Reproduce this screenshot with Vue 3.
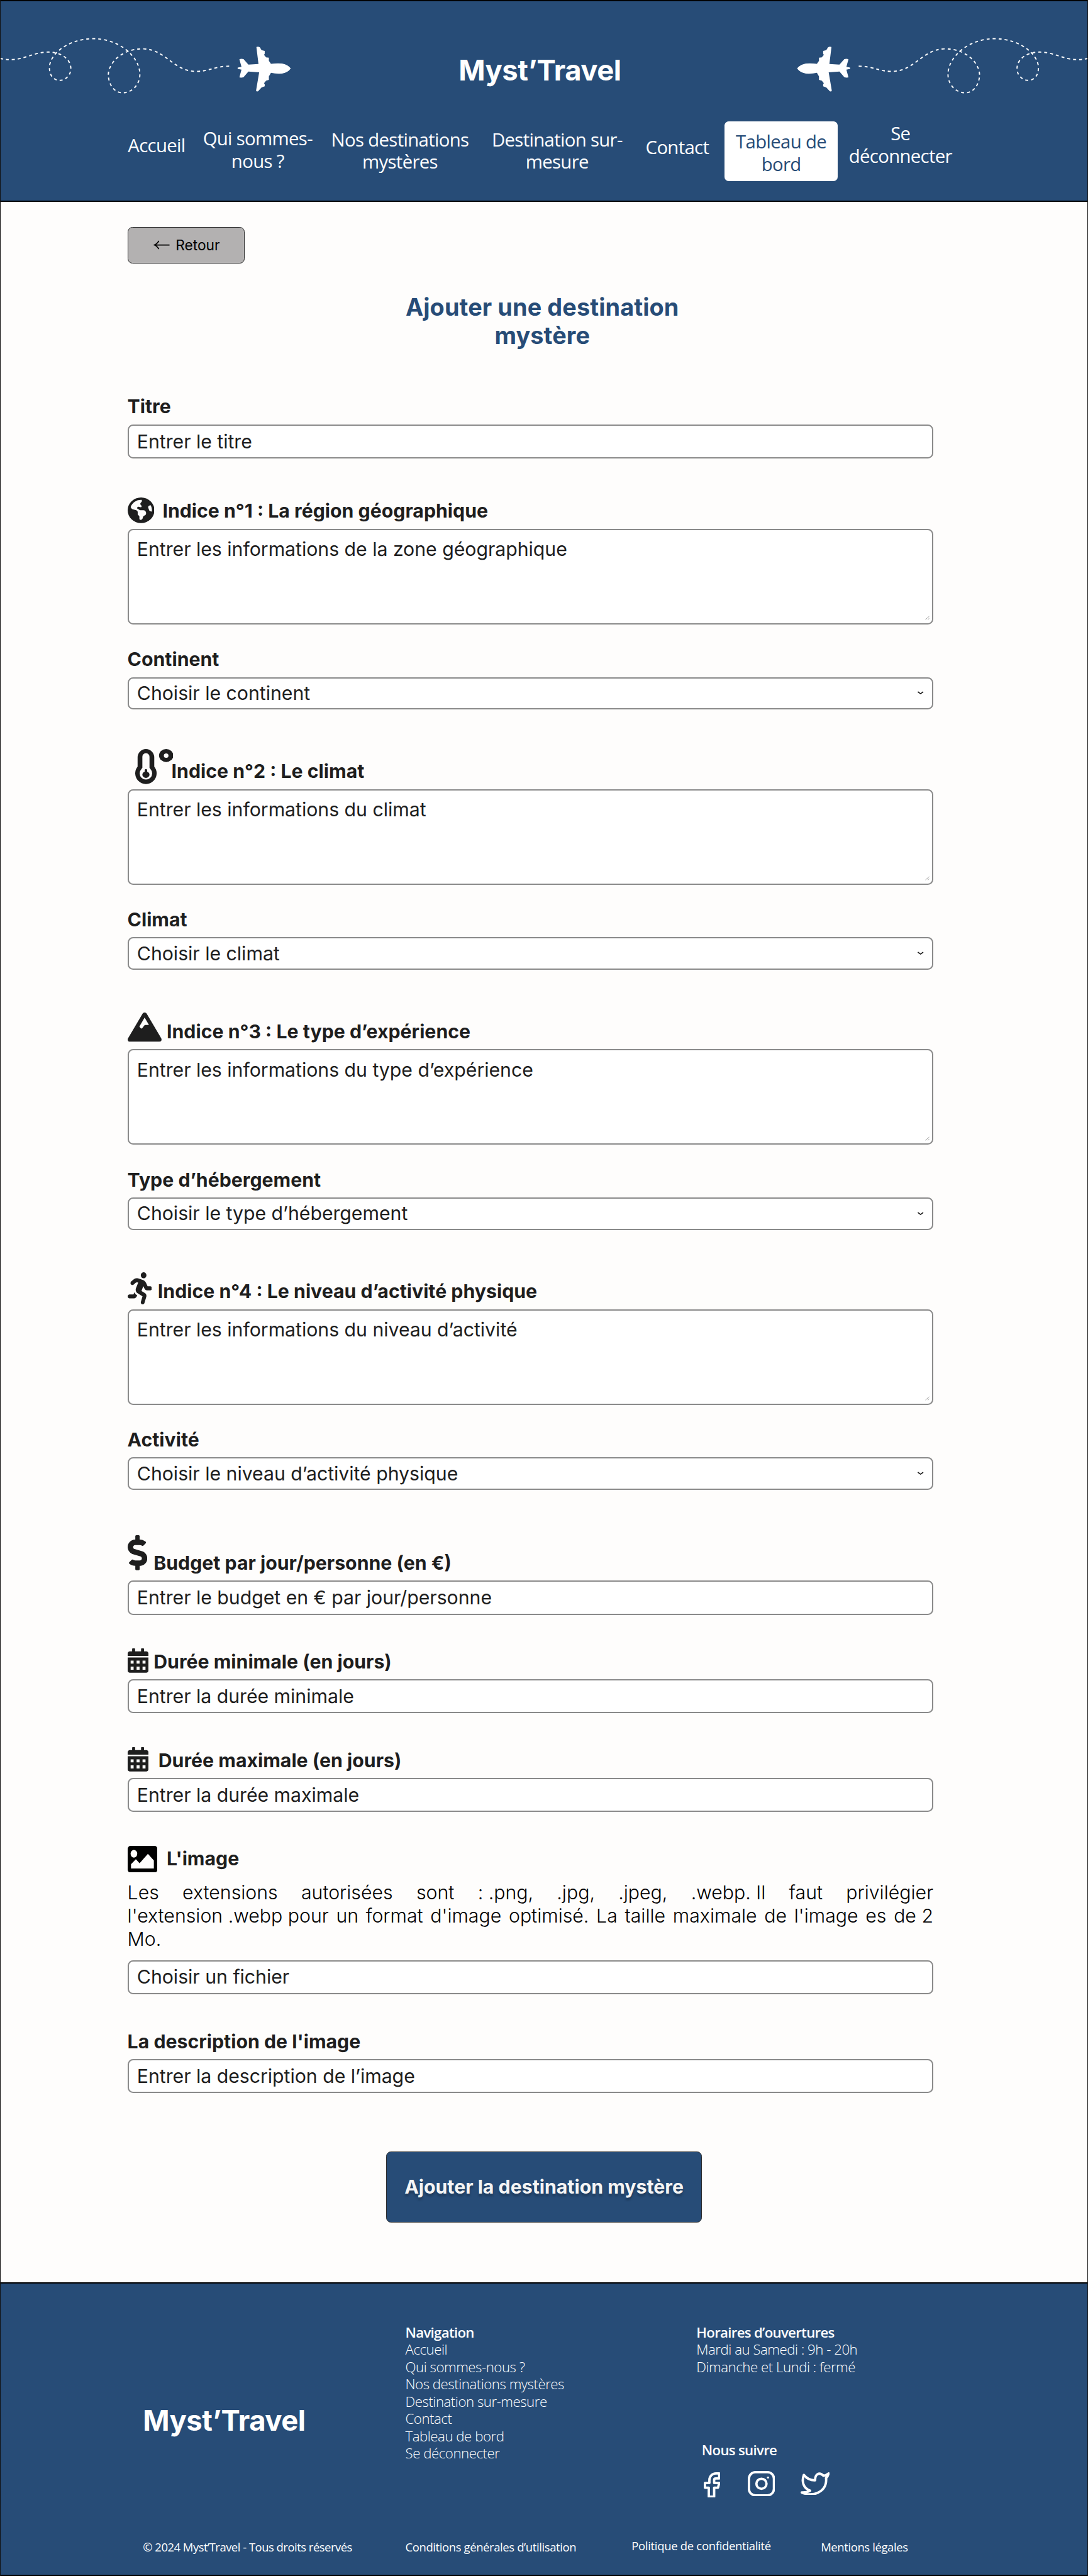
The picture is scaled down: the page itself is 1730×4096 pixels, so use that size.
<script setup>
const navItems = [
  { lines: ['Accueil'], cls: 'n-accueil' },
  { lines: ['Qui sommes-', 'nous ?'], cls: 'n-qui' },
  { lines: ['Nos destinations', 'mystères'], cls: 'n-nos' },
  { lines: ['Destination sur-', 'mesure'], cls: 'n-dest' },
  { lines: ['Contact'], cls: 'n-contact' },
  { lines: ['Tableau de', 'bord'], cls: 'n-bord active' },
  { lines: ['Se', 'déconnecter'], cls: 'n-out' },
]

const fields = [
  { id: 'titre', label: 'Titre', kind: 'input', text: 'Entrer le titre' },
  { id: 'region', icon: 'globe', label: 'Indice n°1 : La région géographique', kind: 'area', text: 'Entrer les informations de la zone géographique' },
  { id: 'continent', label: 'Continent', kind: 'select', text: 'Choisir le continent' },
  { id: 'indice2', icon: 'thermo', label: 'Indice n°2 : Le climat', kind: 'area', text: 'Entrer les informations du climat' },
  { id: 'climat', label: 'Climat', kind: 'select', text: 'Choisir le climat' },
  { id: 'indice3', icon: 'mountain', label: 'Indice n°3 : Le type d’expérience', kind: 'area', text: 'Entrer les informations du type d’expérience' },
  { id: 'type', label: 'Type d’hébergement', kind: 'select', text: 'Choisir le type d’hébergement' },
  { id: 'indice4', icon: 'runner', label: 'Indice n°4 : Le niveau d’activité physique', kind: 'area', text: 'Entrer les informations du niveau d’activité' },
  { id: 'activite', label: 'Activité', kind: 'select', text: 'Choisir le niveau d’activité physique' },
  { id: 'budget', icon: 'dollar', label: 'Budget par jour/personne (en €)', kind: 'input', text: 'Entrer le budget en € par jour/personne' },
  { id: 'dmin', icon: 'calendar', label: 'Durée minimale (en jours)', kind: 'input', text: 'Entrer la durée minimale' },
  { id: 'dmax', icon: 'calendar', label: 'Durée maximale (en jours)', kind: 'input', text: 'Entrer la durée maximale' },
  { id: 'image', icon: 'picture', label: "L'image", kind: 'input', note: true, text: 'Choisir un fichier' },
  { id: 'desc', label: "La description de l'image", kind: 'input', text: 'Entrer la description de l’image' },
]

const icons = {
  globe: {
    box: '0 0 512 512',
    d: 'M57.7 193l9.4 16.4c8.3 14.5 21.9 25.2 38 29.8L163 255.7c17.2 4.9 29 20.6 29 38.5v39.9c0 11 6.2 21 16 25.9s16 14.9 16 25.9v39c0 15.6 14.9 26.9 29.9 22.6c16.1-4.6 28.6-17.5 32.7-33.8l2.8-11.2c4.2-16.9 15.2-31.4 30.3-40l8.1-4.6c15-8.5 24.2-24.5 24.2-41.7v-8.3c0-12.700-5.100-24.900-14.100-33.900l-3.900-3.900c-9-9-21.200-14.100-33.900-14.100H257c-11.100 0-22.100-2.900-31.800-8.400l-34.500-19.700c-4.300-2.500-7.600-6.500-9.200-11.200c-3.200-9.600 1.100-20 10.200-24.500l5.900-3c6.600-3.300 14.300-3.900 21.300-1.500l23.200 7.700c8.200 2.700 17.200-.4 21.900-7.500c4.700-7 4.200-16.300-1.200-22.800l-13.600-16.300c-10-12-9.900-29.500 .3-41.300l15.700-18.300c8.800-10.300 10.200-25 3.500-36.700l-2.400-4.200c-3.500-.2-6.900-.3-10.400-.3C163.100 48 84.400 108.900 57.700 193zM464 256c0-36.800-9.600-71.400-26.400-101.500L412 164.800c-15.700 6.300-23.800 23.800-18.500 39.800l16.900 50.700c3.500 10.400 12 18.300 22.600 20.900l29.100 7.300c1.200-9 1.800-18.200 1.800-27.500zM0 256a256 256 0 1 1 512 0A256 256 0 1 1 0 256z',
  },
  thermo: {
    box: '0 0 64 59',
    d: 'M18 0a14 14 0 0 1 14 14v15.500a18 18 0 1 1 -28 0V14A14 14 0 0 1 18 0zM18 7a6 6 0 0 0 -6 6v18.500l-1.500 2a10.500 10.500 0 1 0 15 0l-1.500-2V13a6 6 0 0 0 -6-6zM16 38v-3q2-3 4 0v3q4 1.500 4 5a6 5.500 0 0 1 -12 0q0-3.500 4-5zM52 0a12 10.900 0 1 1 0 21.800a12 10.900 0 1 1 0-21.800zM52 7.400a3.900 3.700 0 1 0 0 7.400a3.900 3.700 0 1 0 0-7.400z',
  },
  mountain: {
    box: '0 32 512 448',
    d: 'M256 32c12.500 0 24.100 6.400 30.800 17L508 430c10 24-2 50-30 50H34c-28 0-40-26-30-50L225.200 49c6.600-10.600 18.300-17 30.800-17zm65 192L256 110 176.900 246.500l18.300 24.400c6.400 8.500 19.200 8.500 25.600 0l25.600-34.100c6-8.100 15.500-12.800 25.600-12.800h49z',
  },
  runner: {
    box: '0 0 416 512',
    d: 'M272 96c26.510 0 48-21.490 48-48S298.510 0 272 0s-48 21.490-48 48 21.490 48 48 48zM113.690 317.470l-14.800 34.520H32c-17.670 0-32 14.330-32 32s14.330 32 32 32h77.450c19.250 0 36.580-11.440 44.110-29.090l8.790-20.520-10.670-6.300c-17.320-10.230-30.060-25.370-37.990-42.610zM384 223.990h-44.030l-26.060-53.250c-12.500-25.550-35.450-44.230-61.780-50.940l-71.080-21.140c-28.300-6.800-57.770-.55-80.840 17.140l-39.670 30.410c-14.030 10.750-16.690 30.830-5.920 44.860s30.840 16.660 44.860 5.920l39.690-30.410c7.670-5.890 17.440-8 25.270-6.140l14.700 4.370-37.460 87.390c-12.620 29.480-1.310 64.010 26.300 80.310l84.980 50.170-27.470 87.730c-5.280 16.860 4.110 34.810 20.970 40.090 3.190 1 6.410 1.480 9.580 1.480 13.610 0 26.230-8.770 30.520-22.450l31.640-101.060c5.910-20.770-2.890-43.080-21.640-54.390l-61.240-36.140 31.310-78.280 20.270 41.430c8 16.340 24.920 26.890 43.110 26.890H384c17.670 0 32-14.330 32-32s-14.330-31.990-32-31.990z',
  },
  dollar: {
    box: '0 0 288 512',
    d: 'M209.200 233.400l-108-31.600C88.700 198.200 80 186.500 80 173.500c0-16.300 13.200-29.500 29.500-29.500h66.300c12.200 0 24.200 3.700 34.200 10.500 6.100 4.100 14.300 3.100 19.500-2l34.800-34c7.100-6.900 6.100-18.400-1.800-24.500C238 74.800 207.400 64.100 176 64V16c0-8.800-7.200-16-16-16h-32c-8.800 0-16 7.200-16 16v48h-2.500C45.800 64-5.400 118.700.5 183.600c4.200 46.100 39.400 83.600 83.800 96.600l102.500 30c12.500 3.700 21.200 15.300 21.200 28.300 0 16.300-13.200 29.500-29.500 29.500h-66.300C100 368 88 364.300 78 357.500c-6.100-4.100-14.300-3.100-19.500 2l-34.800 34c-7.100 6.900-6.100 18.400 1.800 24.500 24.500 19.200 55.100 29.900 86.500 30v48c0 8.800 7.200 16 16 16h32c8.800 0 16-7.200 16-16v-48.200c46.600-.9 90.300-28.600 105.700-72.700 21.500-61.600-14.600-124.800-72.500-141.700z',
  },
  calendar: {
    box: '0 0 448 512',
    d: 'M400 64h-48V16c0-8.800-7.200-16-16-16h-32c-8.800 0-16 7.200-16 16v48H160V16c0-8.800-7.200-16-16-16h-32c-8.800 0-16 7.200-16 16v48H48C21.500 64 0 85.500 0 112v48h448v-48c0-26.500-21.500-48-48-48zM0 464c0 26.500 21.500 48 48 48h352c26.500 0 48-21.500 48-48V192H0zM64 256h64v64H64zM192 256h64v64h-64zM320 256h64v64h-64zM64 384h64v64H64zM192 384h64v64h-64zM320 384h64v64h-64z',
  },
  picture: {
    box: '0 0 50 45',
    d: 'M5 0h40a5 5 0 0 1 5 5v35a5 5 0 0 1 -5 5H5a5 5 0 0 1 -5-5V5a5 5 0 0 1 5-5zM10.500 6.800a5.600 6.500 0 1 0 0 13a5.600 6.500 0 1 0 0-13zM5.600 31L13.800 22.500 20 29.300 34 13.400 44 24.500V38H5.600z',
  },
}

const footerNav = ['Accueil', 'Qui sommes-nous ?', 'Nos destinations mystères', 'Destination sur-mesure', 'Contact', 'Tableau de bord', 'Se déconnecter']
</script>

<template>
  <div class="page">
    <header class="header">
      <div class="banner">
        <svg v-for="side in ['left', 'right']" :key="side" class="flight" :class="side" width="489" height="160" viewBox="0 0 489 160">
          <path class="trail" d="M0 98C8 100 14 100.500 22 100C42 99 60 87 82 87.500C104 88 119 100 119 115C119 127 110 135 100 135C90 135 83 127 83 113C84 90 115 65 157 65C200 65 235 95 235 125C235 142 222 156 206 156C192 156 182 142 182 125C183 105 205 82 240 82C280 83 290 120 330 120C350 120 362 111 388 111" />
          <path class="plane" transform="translate(399.300 78.300) scale(.5829 .3333)" d="M0 106L11 102L5 64Q10 60 17 63L31 91L60 88L54 2Q59 -2 64 4L69 18L78 22V36L76 42L82 54L90 56V72L96 87Q110 83 128 85Q146 92 153 110Q146 130 128 136Q110 138 96 132L90 150V168L82 172L76 184L78 190V200L69 206L59 225Q55 228 53 222L62 130L31 126L17 154Q10 158 5 155L11 116L0 112Z" />
        </svg>
        <h1 class="brand">Myst’Travel</h1>
      </div>
      <nav class="nav">
        <a v-for="item in navItems" :key="item.cls" class="nav-item" :class="item.cls">
          <span v-for="line in item.lines" :key="line">{{ line }}</span>
        </a>
      </nav>
    </header>

    <main class="main">
      <a class="back">
        <svg class="arrow" viewBox="0 0 28 16"><path d="M9 1Q6.500 6 1.500 8Q6.500 10 9 15M1.500 8H27" /></svg>
        <span>Retour</span>
      </a>
      <h2 class="title">Ajouter une destination<br>mystère</h2>

      <div v-for="f in fields" :key="f.id" class="field" :class="'f-' + f.id">
        <div class="label-row">
          <svg v-if="f.icon" class="icon" :class="f.icon" :viewBox="icons[f.icon].box" preserveAspectRatio="none">
            <path :d="icons[f.icon].d" fill-rule="evenodd" />
          </svg>
          <span class="label">{{ f.label }}</span>
        </div>
        <p v-if="f.note" class="note">Les extensions autorisées sont <span>: .png,</span> .jpg, .jpeg, <span>.webp. Il</span> faut privilégier <span>l'extension .webp pour</span> un format d'image optimisé. La taille maximale de l'image es <span>de 2</span> Mo.</p>
        <div class="control" :class="f.kind">
          <span class="value">{{ f.text }}</span>
          <svg v-if="f.kind === 'select'" class="chevron" viewBox="0 0 10 6"><path d="M.5 1L5 4.300L9.500 1" /></svg>
          <svg v-if="f.kind === 'area'" class="grip" viewBox="0 0 8 8"><path d="M.5 6.500L7 1M4.500 6.500L7 4.500" /></svg>
        </div>
      </div>

      <button class="submit">Ajouter la destination mystère</button>
    </main>

    <footer class="footer">
      <div class="footer-top">
        <div class="brand footer-brand">Myst’Travel</div>
        <div class="footer-nav">
          <strong>Navigation</strong>
          <a v-for="link in footerNav" :key="link">{{ link }}</a>
        </div>
        <div class="footer-info">
          <strong>Horaires d’ouvertures</strong>
          <span>Mardi au Samedi : 9h - 20h</span>
          <span>Dimanche et Lundi : fermé</span>
          <strong class="follow">Nous suivre</strong>
          <div class="socials">
            <svg class="fb" viewBox="0 0 28 43"><path d="M26 2H20.500A11 11 0 0 0 9.500 13V18H2V26H8.500V41H17.500V26H24L26 18H17.500V13Q17.500 10.500 20 10.500H26Z" /></svg>
            <svg class="ig" viewBox="0 0 46 43"><rect x="2" y="2" width="42" height="39" rx="11" /><circle cx="23" cy="21.500" r="8.500" /><circle class="dot" cx="34" cy="11" r="1.800" /></svg>
            <svg class="tw" viewBox="0 0 49 39"><path d="M47 2Q43 5 38.500 6C31 -1.500 24 4 24.500 13.500Q13 14 5.500 4.500C1 16 5 27 16 31Q10 34.500 2 34C20 42 43 34 43 12.500Q43 11.500 42.700 10Q46 7 47 2Z" /></svg>
          </div>
        </div>
      </div>
      <div class="legal">
        <span class="l-copy">© 2024 Myst’Travel - Tous droits réservés</span>
        <span class="l-cgu">Conditions générales d’utilisation</span>
        <span class="l-priv">Politique de confidentialité</span>
        <span class="l-ment">Mentions légales</span>
      </div>
    </footer>
  </div>
</template>

<style>
body { margin: 0; background: #fefdfc; }
</style>

<style scoped>
.page {
  zoom: 0.9464;
  box-sizing: border-box;
  width: 1828px;
  height: 4328px;
  background: #fefdfc;
  color: #1e1e1e;
  font-family: Inter, "Liberation Sans", sans-serif;
  font-size: 32px;
  line-height: 39px;
  border-left: 1.100px solid #111;
  border-right: 1.100px solid #111;
  display: flex;
  flex-direction: column;
  overflow: hidden;
}
.header, .footer {
  background: #274c77;
  color: #fff;
  box-sizing: border-box;
  border: solid #000;
  border-width: 2.120px 0;
  flex: none;
}
.header { height: 339px; }
.banner { display: flex; justify-content: space-between; height: 160px; margin-top: -2px; }
.flight { flex: none; margin-left: -1px; }
.flight.right { order: 3; transform: scaleX(-1); margin: 0 -1px 0 0; }
.trail { fill: none; stroke: #fff; stroke-width: 2; stroke-dasharray: 5 5; }
.plane { fill: #fff; }
.brand { margin: 0; font-size: 48px; line-height: 58px; font-weight: 700; letter-spacing: -.5px; white-space: nowrap; }
h1.brand { order: 2; margin: 89.500px 14px 0 0; }

.nav {
  display: flex;
  height: 150px;
  margin-top: 44px;
  padding-left: 212px;
  font-family: "Open Sans", "Noto Sans", sans-serif;
  font-size: 31px;
  line-height: 38px;
  letter-spacing: -.7px;
}
.nav-item { display: flex; flex-direction: column; align-items: center; white-space: nowrap; flex: none; box-sizing: border-box; }
.n-accueil { width: 100px; padding-top: 22px; }
.n-qui { width: 186px; margin-left: 27px; padding-top: 10px; }
.n-nos { width: 236px; margin-left: 28px; padding-top: 12px; }
.n-dest { width: 226px; margin-left: 33px; padding-top: 12px; }
.n-contact { width: 108px; margin-left: 35px; padding-top: 25px; }
.n-bord { width: 191px; height: 100px; margin-left: 25px; padding-top: 15.500px; background: #fff; color: #274c77; border-radius: 7px; }
.n-out { width: 176px; margin-left: 17px; padding-top: 2px; }

.main { width: 1354px; margin-left: 213px; flex: 1; display: flex; flex-direction: column; }
.back {
  box-sizing: border-box;
  display: flex;
  align-items: center;
  gap: 9px;
  width: 197px;
  height: 62px;
  margin-top: 42px;
  padding-left: 43px;
  border: 1.100px solid #2c2c2c;
  border-radius: 8px;
  background: #b3b1b1;
  color: #000;
  font-size: 24px;
  line-height: 30px;
}
.arrow { width: 28px; height: 16px; fill: none; stroke: #000; stroke-width: 1.800; }
.title { width: 1394px; margin: 49px 0 75.700px; font-size: 40px; line-height: 48px; font-weight: 700; letter-spacing: .1px; color: #274c77; text-align: center; }

.label-row { display: flex; align-items: flex-end; height: 41.600px; margin-bottom: 8px; }
.label { font-weight: 700; padding-bottom: 2.200px; white-space: nowrap; }
.icon { flex: none; fill: #1e1e1e; }
.globe { width: 45px; height: 43px; margin: 0 14px 1.800px 0; }
.thermo { width: 64px; height: 59px; margin: 0 -3px .4px 13px; }
.mountain { width: 57px; height: 49px; margin: 0 9px 4.500px 0; }
.runner { width: 41px; height: 54px; margin-right: 10px; }
.dollar { width: 33px; height: 59px; margin: 0 11px 9.500px 0; }
.calendar { width: 35px; height: 41px; margin: 0 9px 3px 0; }
.f-dmax .calendar { margin-right: 17px; }
.picture { width: 50px; height: 45px; margin: 0 16px -1px 0; fill: #000; }

.control {
  box-sizing: border-box;
  display: flex;
  align-items: center;
  border: 2.120px solid #8a8a8a;
  border-radius: 9px;
  background: #fff;
  padding: 0 14px;
}
.value { flex: 1; letter-spacing: -.04px; white-space: nowrap; }
.input { height: 57.200px; }
.select { height: 54.500px; }
.area { height: 160.500px; align-items: flex-start; padding-top: 13px; padding-right: 4px; }
.chevron { width: 10px; height: 6px; fill: none; stroke: #1e1e1e; stroke-width: 1.800; }
.grip { width: 8px; height: 8px; align-self: flex-end; margin-bottom: 4px; fill: none; stroke: #999; stroke-width: 1; }

.f-region { margin-top: 68.500px; }
.f-continent, .f-climat, .f-type, .f-activite { margin-top: 38.900px; }
.f-indice2, .f-indice3 { margin-top: 84.200px; }
.f-indice4 { margin-top: 83.500px; }
.f-budget { margin-top: 103.200px; }
.f-dmin, .f-image { margin-top: 58.800px; }
.f-dmax { margin-top: 59.400px; }
.f-desc { margin-top: 59.700px; }

.note { margin: 15.600px 0 15.500px; font-weight: 300; color: #000; text-align: justify; }
.note span { display: inline-block; }

.submit {
  box-sizing: border-box;
  width: 530px;
  height: 119px;
  margin: 98px 0 0 435px;
  padding: 0;
  border: 1.100px solid #2c2c2c;
  border-radius: 8px;
  background: #274c77;
  color: #f5f5f5;
  font: 700 32px/39px Inter, "Liberation Sans", sans-serif;
  text-shadow: 0 4px 4px rgba(0, 0, 0, .25);
  white-space: nowrap;
}

.footer { height: 494px; font-family: "Open Sans", "Noto Sans", sans-serif; font-size: 23.500px; line-height: 29px; letter-spacing: -.5px; }
.footer-top { display: flex; height: 426px; }
.footer-brand { width: 441px; margin: 202px 0 0 239px; font-family: Inter, "Liberation Sans", sans-serif; }
.footer-nav, .footer-info { display: flex; flex-direction: column; padding-top: 68px; font-weight: 300; white-space: nowrap; }
.footer strong { font-weight: 600; letter-spacing: -.75px; }
.footer-nav { width: 489px; }
.follow { margin: 111px 0 0 9px; }
.socials { display: flex; align-items: flex-start; margin: 20px 0 0 12px; }
.socials svg { fill: none; stroke: #fff; stroke-width: 4; stroke-linejoin: round; }
.socials .dot { fill: #fff; stroke: none; }
.fb { width: 28px; height: 43px; margin-top: 2px; }
.ig { width: 46px; height: 43px; margin-left: 46px; }
.tw { width: 49px; height: 39px; margin: 2px 0 0 43px; }
.legal { display: flex; font-size: 19.500px; line-height: 24px; letter-spacing: -.4px; padding-left: 239px; margin-top: 6px; white-space: nowrap; }
.l-copy { width: 441px; letter-spacing: -.52px; }
.l-cgu { width: 380px; }
.l-priv { width: 318px; margin-top: -2px; letter-spacing: -.3px; }
</style>
